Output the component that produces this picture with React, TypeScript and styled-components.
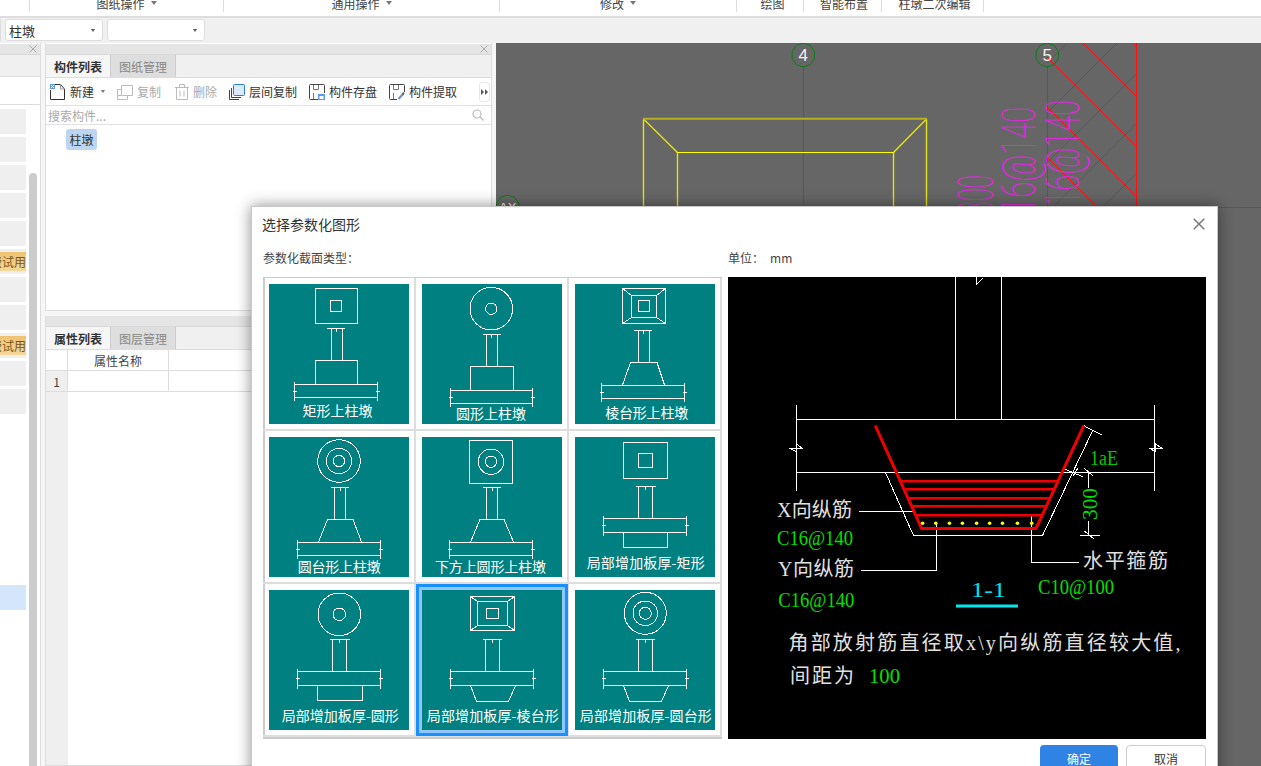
import React from "react";
import styled, { createGlobalStyle } from "styled-components";

const Global = createGlobalStyle`
  html, body { margin: 0; padding: 0; background: #fff; }
  body { font-family: "Noto Sans CJK SC", "Liberation Sans", sans-serif; font-size: 12px; color: #333; }
  * { box-sizing: border-box; }
`;

const Page = styled.div`
  position: relative;
  width: 1261px;
  height: 766px;
  overflow: hidden;
  display: flex;
  flex-direction: column;
  background: #f6f6f6;
`;

/* ---------- ribbon ---------- */
const Ribbon = styled.div`
  height: 18px;
  flex: none;
  display: flex;
  align-items: flex-start;
  background: #fff;
  border-bottom: 2px solid #ddd;
  overflow: hidden;
`;
const RibbonGroup = styled.div<{ $w: number; $pl?: number }>`
  width: ${(p) => p.$w}px;
  height: 12px;
  flex: none;
  display: flex;
  align-items: flex-end;
  justify-content: center;
  padding-left: ${(p) => p.$pl ?? 0}px;
  border-right: 1px solid #ddd;
  color: #444;
  line-height: 16px;
  white-space: nowrap;
`;
const RibbonCaret = styled.i`
  width: 0;
  height: 0;
  margin: 0 0 7px 6px;
  border-left: 3.5px solid transparent;
  border-right: 3.5px solid transparent;
  border-top: 4px solid #777;
`;

const SelectBar = styled.div`
  height: 25px;
  flex: none;
  display: flex;
  gap: 4px;
  padding-top: 1px;
  background: #f0f0f0;
`;
const Select = styled.div<{ $w: number }>`
  width: ${(p) => p.$w}px;
  height: 22px;
  display: flex;
  align-items: center;
  justify-content: space-between;
  padding: 0 7px 0 3px;
  background: #fff;
  border: 1px solid #ddd;
  border-radius: 3px;
  font-size: 13px;
  color: #333;
  overflow: hidden;
`;
const SelectStub = styled.div`
  width: 1px;
  height: 22px;
  background: #ddd;
`;
const SelectCaret = styled.i`
  width: 0;
  height: 0;
  border-left: 2.5px solid transparent;
  border-right: 2.5px solid transparent;
  border-top: 3px solid #555;
`;

/* ---------- main ---------- */
const Main = styled.div`
  flex: 1;
  min-height: 0;
  display: flex;
`;

const LeftPanel = styled.div`
  width: 41px;
  flex: none;
  display: flex;
  flex-direction: column;
  background: #fff;
  border-right: 1px solid #ddd;
`;
const PanelHead = styled.div<{ $flush?: boolean }>`
  height: 11px;
  flex: none;
  margin-top: ${(p) => (p.$flush ? 0 : 1)}px;
  display: flex;
  align-items: center;
  justify-content: flex-end;
  padding-right: 3px;
  background: #e5e5e5;
  border-bottom: 1px solid #d8d8d8;
`;
const LeftStrip = styled.div`
  height: 22px;
  flex: none;
  background: #f0f0f0;
  border-bottom: 1px solid #ddd;
`;
const LeftBlank = styled.div`
  height: 28px;
  flex: none;
  border-bottom: 1px solid #ddd;
`;
const LeftBody = styled.div`
  flex: 1;
  min-height: 0;
  display: flex;
  padding-top: 4px;
`;
const RowList = styled.div`
  width: 26px;
  flex: none;
  display: flex;
  flex-direction: column;
  gap: 3px;
`;
const NavRow = styled.div<{ $kind: string }>`
  height: 25px;
  flex: none;
  display: flex;
  align-items: center;
  justify-content: flex-end;
  overflow: hidden;
  background: ${(p) =>
    p.$kind === "selected" ? "#d4e6fb" : p.$kind === "empty" ? "#fff" : "#efefef"};
`;
const TrialBadge = styled.div`
  width: 26px;
  height: 19px;
  flex: none;
  display: flex;
  justify-content: flex-end;
  align-items: center;
  background: linear-gradient(#efc270, #f5d79b);
  color: #7b5518;
  line-height: 19px;
  white-space: nowrap;
`;
const ScrollThumb = styled.div`
  width: 8px;
  flex: none;
  margin: 64px 0 0 3px;
  background: #ccc;
  border-radius: 4px 4px 0 0;
`;

const MiddleColumn = styled.div`
  width: 447px;
  flex: none;
  margin: 0 4px;
  display: flex;
  flex-direction: column;
  gap: 5px;
`;
const Pane = styled.div<{ $h?: number }>`
  ${(p) => (p.$h ? `height: ${p.$h}px; flex: none;` : "flex: 1; min-height: 0;")}
  display: flex;
  flex-direction: column;
  background: #fff;
  border: 1px solid #ddd;
  border-top: 0;
`;
const TabStrip = styled.div`
  height: 23px;
  flex: none;
  display: flex;
  background: #f0f0f0;
  border-bottom: 1px solid #ddd;
`;
const Tab = styled.div<{ $active?: boolean }>`
  width: 65px;
  display: flex;
  align-items: center;
  justify-content: center;
  font-weight: ${(p) => (p.$active ? 700 : 400)};
  color: ${(p) => (p.$active ? "#333" : "#888")};
  background: ${(p) => (p.$active ? "#f6f6f6" : "#dedede")};
  border-right: 1px solid #ccc;
`;
const ToolRow = styled.div`
  height: 28px;
  flex: none;
  display: flex;
  align-items: center;
  gap: 12px;
  padding-left: 4px;
  border-bottom: 1px solid #e2e2e2;
`;
const ToolButton = styled.div<{ $muted?: boolean; $ml?: number }>`
  display: flex;
  align-items: center;
  gap: 4px;
  margin-left: ${(p) => p.$ml ?? 0}px;
  color: ${(p) => (p.$muted ? "#aaa" : "#333")};
  white-space: nowrap;
`;
const ToolCaret = styled.i`
  width: 0;
  height: 0;
  margin-left: 3px;
  border-left: 2.5px solid transparent;
  border-right: 2.5px solid transparent;
  border-top: 3px solid #777;
`;
const MoreButton = styled.div`
  width: 11px;
  height: 20px;
  margin: 0 1px 0 auto;
  display: flex;
  align-items: center;
  justify-content: center;
  background: #fff;
  border: 1px solid #e6e6e6;
  border-radius: 3px;
`;
const SearchRow = styled.div`
  height: 19px;
  flex: none;
  display: flex;
  align-items: center;
  justify-content: space-between;
  padding: 0 7px 0 2px;
  color: #aaa;
  border-bottom: 1px solid #e2e2e2;
`;
const TreeArea = styled.div`
  flex: 1;
  padding: 4px 0 0 20px;
`;
const TreeTag = styled.div`
  width: 31px;
  height: 21px;
  display: flex;
  align-items: center;
  justify-content: center;
  background: #bcd6f2;
  border-radius: 3px;
  color: #333;
`;
const PropGrid = styled.div`
  flex: none;
  display: grid;
  grid-template-columns: 22px 101px 1fr;
  grid-auto-rows: 21px;
`;
const PropCell = styled.div<{ $index?: boolean }>`
  display: flex;
  align-items: center;
  justify-content: center;
  background: ${(p) => (p.$index ? "#efefef" : "#fff")};
  color: #444;
  border-right: 1px solid #ddd;
  border-bottom: 1px solid #ddd;
`;
const PropFill = styled.div`
  flex: 1;
  width: 22px;
  background: #efefef;
`;

const CanvasArea = styled.div`
  flex: 1;
  min-width: 0;
  background: #666;
`;
const DrawingSvg = styled.svg`
  display: block;
  width: 100%;
  height: 100%;
`;

/* ---------- modal ---------- */
const Modal = styled.div`
  position: absolute;
  left: 251px;
  top: 206px;
  width: 967px;
  height: 590px;
  padding: 0 11px;
  background: #fff;
  border: 1px solid #c8c8c8;
  box-shadow: 0 0 14px rgba(0, 0, 0, 0.45);
`;
const ModalTitle = styled.div`
  height: 32px;
  margin-left: -1px;
  display: flex;
  align-items: center;
  justify-content: space-between;
  font-size: 14px;
  line-height: 20px;
  color: #333;
  padding: 2px 1px 0 0;
`;
const ModalBody = styled.div`
  display: flex;
  gap: 6px;
`;
const LeftCol = styled.div`
  width: 459px;
  flex: none;
`;
const RightCol = styled.div`
  width: 478px;
  flex: none;
`;
const SmallLabel = styled.div`
  height: 38px;
  display: flex;
  align-items: center;
  gap: 6px;
  padding-bottom: 2px;
  font-size: 12px;
  color: #444;
`;
const ThumbGrid = styled.div`
  display: grid;
  grid-template-columns: repeat(3, 153px);
  grid-auto-rows: 153px;
  border-top: 1px solid #ccc;
  border-bottom: 2px solid #ccc;
  box-shadow: inset 2px 0 0 #ccc, inset -2px 0 0 #ccc;
`;
const ThumbCell = styled.div`
  padding: 6px;
  border-right: 2px solid #ddd;
  border-bottom: 2px solid #ddd;
`;
const ThumbImage = styled.svg<{ $selected?: boolean }>`
  display: block;
  width: 140px;
  height: 140px;
  background: #008080;
  box-shadow: ${(p) => (p.$selected ? "0 0 0 3px #90c6f9, 0 0 0 6px #1890ff" : "none")};
`;
const ThumbCaption = styled.text`
  font-family: "Noto Sans CJK SC", sans-serif;
  font-size: 14px;
  fill: #fff;
  text-anchor: middle;
  dominant-baseline: central;
`;
const PreviewSvg = styled.svg`
  display: block;
  width: 478px;
  height: 462px;
  background: #000;
`;
const CadText = styled.text<{ $color?: string; $size?: number }>`
  font-family: "Liberation Serif", serif;
  font-size: ${(p) => p.$size ?? 22}px;
  fill: ${(p) => p.$color ?? "#00e000"};
  dominant-baseline: central;
`;
const CadLabel = styled.text`
  font-family: "Liberation Serif", "Noto Sans CJK SC", serif;
  font-size: 20px;
  fill: #e0e0e0;
  dominant-baseline: central;
`;
const Footer = styled.div`
  display: flex;
  justify-content: flex-end;
  gap: 8px;
  margin-top: 6px;
`;
const Button = styled.div<{ $primary?: boolean }>`
  width: ${(p) => (p.$primary ? 78 : 80)}px;
  height: 27px;
  display: flex;
  align-items: center;
  justify-content: center;
  border-radius: 4px;
  background: ${(p) => (p.$primary ? "#2e83e4" : "#fff")};
  border: ${(p) => (p.$primary ? "0" : "1px solid #ccc")};
  color: ${(p) => (p.$primary ? "#fff" : "#333")};
  font-size: 12px;
`;

/* ---------- icons ---------- */
const Cross = ({ s = 8, c = "#aaa" }: { s?: number; c?: string }) => (
  <svg width={s} height={s} viewBox="0 0 8 8" fill="none" stroke={c} strokeWidth="1">
    <path d="M.5.5l7 7M7.5.5l-7 7" />
  </svg>
);
const IconNew = () => (
  <svg width="16" height="16" viewBox="0 0 16 16" fill="none">
    <path d="M.5 6v9.5h14V5L10.5.5H5" stroke="#333" />
    <path d="M10.5.5V5h4" stroke="#999" />
    <path d="M0 0h5v5H0z" fill="#5b9bec" />
    <path d="M1 1h1v1H1zM3 1h1v1H3zM2 2h1v1H2zM1 3h1v1H1zM3 3h1v1H3z" fill="#fff" />
  </svg>
);
const IconCopy = () => (
  <svg width="16" height="16" viewBox="0 0 16 16" fill="none" stroke="#bbb">
    <path d="M4 10.5H.5V4.5H4M4.5 .5h11v10h-11z" transform="translate(0 1)" />
    <path d="M.5 5.5v10h10V11" />
  </svg>
);
const IconTrash = () => (
  <svg width="14" height="16" viewBox="0 0 14 16" fill="none" stroke="#bbb">
    <path d="M0 3.5h14M4.5 3V.5h5V3M1.5 3.5v12h11v-12M5 6.5v6M9 6.5v6" />
  </svg>
);
const IconFloorCopy = () => (
  <svg width="16" height="16" viewBox="0 0 16 16" fill="none">
    <rect x="4.5" y=".5" width="11" height="11" rx="1" fill="#dbe9fb" stroke="#2d7ce0" />
    <path d="M2.5 4v9.5H12M.5 6v9.5H10" stroke="#444" />
  </svg>
);
const IconSave = () => (
  <svg width="16" height="16" viewBox="0 0 16 16" fill="none">
    <path d="M9 15.5H1.5a1 1 0 0 1-1-1v-13a1 1 0 0 1 1-1h13a1 1 0 0 1 1 1V9" stroke="#444" />
    <path d="M4.5 1v4.5h5V1M4.5 15V9" stroke="#777" />
    <rect x="9" y="10" width="7" height="6" fill="#5b9bec" />
    <rect x="10.5" y="12" width="4" height="3" fill="#fff" />
  </svg>
);
const IconFetch = () => (
  <svg width="16" height="16" viewBox="0 0 16 16" fill="none">
    <path d="M8 15.5H1.5a1 1 0 0 1-1-1v-13a1 1 0 0 1 1-1h13a1 1 0 0 1 1 1V8" stroke="#444" />
    <path d="M4.5 1v4.5h5V1M4.5 15V9" stroke="#777" />
    <path d="M9.5 15l4.5-5" stroke="#6a8fc4" strokeWidth="2" />
    <path d="M13 9l2-1 .5 1.5-1.5 2z" fill="#555" />
  </svg>
);
const IconSearch = () => (
  <svg width="12" height="12" viewBox="0 0 12 12" fill="none" stroke="#bbb" strokeWidth="1.2">
    <circle cx="5" cy="5" r="4" />
    <path d="M8 8l3.5 3.5" />
  </svg>
);
const IconMore = () => (
  <svg width="7" height="6" viewBox="0 0 7 6" fill="#555">
    <path d="M0 0l3 3-3 3zM4 0l3 3-3 3z" />
  </svg>
);

/* ---------- thumbnail drawings ---------- */
const Rect = (x1: number, y1: number, x2: number, y2: number) => (
  <rect x={x1} y={y1} width={x2 - x1} height={y2 - y1} />
);
const Poly = (...p: number[]) => <polyline points={p.join(" ")} />;

type Thumb = { name: string; cap: [number, number, number]; selected?: boolean; art: React.ReactNode };

const Slab = (x1: number, x2: number, top: number, bot: number) => (
  <>
    {Poly(x1, top, x2, top)}
    {Poly(x1, bot, x2, bot)}
    {Poly(x1, top - 3, x1, bot + 3)}
    {Poly(x2, top - 3, x2, bot + 3)}
    {Poly(x1 - 2, (top + bot) / 2, x1 + 2, (top + bot) / 2)}
    {Poly(x2 - 2, (top + bot) / 2, x2 + 2, (top + bot) / 2)}
  </>
);
const Column = (cx: number, w1: number, w2: number, dim: number, bot: number, d1: number, d2: number) => (
  <>
    {Poly(w1, dim, w1, bot)}
    {Poly(w2, dim, w2, bot)}
    {Poly(d1, dim, d2, dim)}
    {Poly(cx, dim - 1, cx, dim + 3)}
  </>
);
const Circles = (cx: number, cy: number, ...r: number[]) => (
  <>
    {r.map((v) => (
      <circle key={v} cx={cx} cy={cy} r={v} />
    ))}
  </>
);
const Diag = (a: number, b: number, c: number, d: number, e: number, f: number, g: number, h: number) => (
  <>
    {Rect(a, b, c, d)}
    {Rect(e, f, g, h)}
    {Poly(a, b, e, f)}
    {Poly(c, b, g, f)}
    {Poly(a, d, e, h)}
    {Poly(c, d, g, h)}
  </>
);

const thumbs: Thumb[] = [
  {
    name: "矩形上柱墩", cap: [68.5, 126.2, 70],
    art: (
      <>
        {Rect(46.5, 4.5, 88.5, 39.5)}
        {Rect(61.5, 16.5, 72.5, 27.5)}
        {Column(67, 62.5, 73.5, 44.5, 76.5, 58, 76)}
        {Rect(46.5, 76.5, 88.5, 100.5)}
        {Slab(25.5, 108.5, 100.5, 113.5)}
      </>
    ),
  },
  {
    name: "圆形上柱墩", cap: [69, 128.5, 70],
    art: (
      <>
        {Circles(69.3, 24.7, 21.3, 5.7)}
        {Column(69.5, 64.5, 75.5, 50.5, 82.5, 60.5, 79)}
        {Rect(48.5, 82.5, 91.5, 106.5)}
        {Slab(28.5, 110.5, 106.5, 119.5)}
      </>
    ),
  },
  {
    name: "棱台形上柱墩", cap: [71.7, 127.8, 83],
    art: (
      <>
        {Diag(47.5, 4.5, 90.5, 39.5, 56.5, 11.5, 81.5, 33.5)}
        {Rect(63.5, 16.5, 74.5, 27.5)}
        {Column(68.5, 63.5, 74.5, 46.5, 78.5, 59, 77)}
        {Poly(47.5, 101, 55.5, 78.5, 82, 78.5, 89.5, 101)}
        {Slab(26.5, 109.5, 101.5, 114.5)}
      </>
    ),
  },
  {
    name: "圆台形上柱墩", cap: [70.2, 129.2, 83],
    art: (
      <>
        {Circles(70, 24, 21.3, 12.7, 5.7)}
        {Column(71, 65.5, 76.5, 50.5, 82.5, 61.5, 79.5)}
        {Poly(49.5, 105, 58.5, 82.5, 84, 82.5, 92.5, 105)}
        {Slab(28.5, 111.5, 105.5, 118.5)}
      </>
    ),
  },
  {
    name: "下方上圆形上柱墩", cap: [68.5, 129.2, 111],
    art: (
      <>
        {Rect(47.5, 3.5, 90.5, 46.5)}
        {Circles(69, 24.7, 12.7, 5.7)}
        {Column(70, 64.5, 75.5, 50.5, 82.5, 60.5, 79)}
        {Poly(48.5, 105, 58, 82.5, 82, 82.5, 91.5, 105)}
        {Slab(27.5, 110.5, 105.5, 118.5)}
      </>
    ),
  },
  {
    name: "局部增加板厚-矩形", cap: [70.7, 124.8, 118],
    art: (
      <>
        {Rect(48.5, 5.5, 92.5, 41.5)}
        {Rect(63.5, 16.5, 77.5, 30.5)}
        {Column(70.5, 63.5, 77.5, 49.5, 81.5, 61, 80.5)}
        {Slab(28.5, 111.5, 81.5, 95.5)}
        {Poly(48.5, 95.5, 48.5, 110.5, 92.5, 110.5, 92.5, 95.5)}
      </>
    ),
  },
  {
    name: "局部增加板厚-圆形", cap: [71.3, 125.2, 117],
    art: (
      <>
        {Circles(70.3, 24.3, 21.3, 6.3)}
        {Column(70.5, 63.5, 77.5, 49.5, 81.5, 60.5, 80.5)}
        {Slab(28.5, 111.5, 81.5, 95.5)}
        {Poly(48.5, 95.5, 48.5, 110.5, 93.5, 110.5, 93.5, 95.5)}
      </>
    ),
  },
  {
    name: "局部增加板厚-棱台形", cap: [70.8, 125.2, 132], selected: true,
    art: (
      <>
        {Diag(48.5, 6.5, 92.5, 40.5, 55.5, 11.5, 85.5, 35.5)}
        {Rect(64.5, 18.5, 76.5, 28.5)}
        {Column(70.5, 63.5, 77.5, 49.5, 81.5, 60.5, 79.5)}
        {Slab(28.5, 111.5, 81.5, 95.5)}
        {Poly(48.5, 95.5, 54.5, 111.5, 86.5, 111.5, 93.5, 95.5)}
      </>
    ),
  },
  {
    name: "局部增加板厚-圆台形", cap: [70.8, 125.2, 132],
    art: (
      <>
        {Circles(70.3, 23.3, 21, 12.3, 6)}
        {Column(70.5, 63.5, 77.5, 49.5, 81.5, 60.5, 80)}
        {Slab(28.5, 111.5, 81.5, 95.5)}
        {Poly(48.5, 95.5, 54.5, 111.5, 86.5, 111.5, 93.5, 95.5)}
      </>
    ),
  },
];

/* ---------- cad canvas behind the dialog ---------- */
const ringPoints = (cx: number, cy: number, r: number, n = 10) =>
  Array.from({ length: n }, (_, i) => {
    const a = (i / n) * Math.PI * 2 - Math.PI / 2;
    return `${(cx + r * Math.cos(a)).toFixed(1)},${(cy + r * Math.sin(a) * 1.02).toFixed(1)}`;
  }).join(" ");

const AxisMark = ({ x, y, label, size = 17 }: { x: number; y: number; label: string; size?: number }) => (
  <>
    <polygon points={ringPoints(x, y, 11.7)} fill="none" stroke="#0a7d14" strokeWidth="1" />
    <text
      x={x}
      y={y + 0.5}
      fill="#f4f4f4"
      fontFamily="Liberation Sans, sans-serif"
      fontSize={size}
      textAnchor="middle"
      dominantBaseline="central"
    >
      {label}
    </text>
  </>
);

const VerticalRebar = ({ x, y, t, size = 29, sy = 1.65 }: { x: number; y: number; t: string; size?: number; sy?: number }) => (
  <text
    transform={`translate(${x} ${y}) rotate(-90) scale(1 ${sy})`}
    textAnchor="end"
    fontFamily="Roboto, sans-serif"
    fontWeight="100"
    fontSize={size}
    fill="#f01cf0"
  >
    {t}
  </text>
);

const CadCanvas = () => {
  const cs = Array.from({ length: 8 }, (_, i) => i);
  return (
    <DrawingSvg viewBox="496 43 765 723">
      <defs>
        <clipPath id="hatchClip">
          <rect x="1047" y="43" width="90" height="164" />
        </clipPath>
      </defs>
      <g stroke="#ff1010" strokeWidth="1" fill="none">
        <path d="M803.5 67V207M1047.5 67V207M1136.5 43V207M496 207.5H1261" />
        <g clipPath="url(#hatchClip)">
          {cs.map((i) => {
            const down = -1090 + i * 50;
            const up = 1110 + i * 50;
            return (
              <React.Fragment key={i}>
                <path d={`M1040 ${1040 + down}L1140 ${1140 + down}`} />
                <path d={`M1040 ${up - 1040}L1140 ${up - 1140}`} />
              </React.Fragment>
            );
          })}
        </g>
      </g>
      <g stroke="#e4e418" strokeWidth="1.4" fill="none">
        <path d="M643.5 119V300M926.5 119V300M677.5 152V300M893.5 152V300" />
        <path d="M643.5 119L677.5 152.5M926.5 119L893.5 152.5" />
        <path d="M643 118.7H927" stroke="#b8b020" strokeWidth="2" />
        <path d="M677 152.5H894" stroke="#ffff00" strokeWidth="1" />
      </g>
      <AxisMark x={803.3} y={55} label="4" />
      <AxisMark x={1047.2} y={55} label="5" />
      <AxisMark x={507.7} y={207} label="AX" size={13} />
      <VerticalRebar x={1035} y={107} t="C16@140" />
      <VerticalRebar x={1079} y={100} t="C16@140" />
      <VerticalRebar x={992.6} y={175} t="300" size={24} sy={2.1} />
    </DrawingSvg>
  );
};

const dots = [922.6, 935.8, 949.4, 962.4, 976.6, 989.6, 1002.5, 1017.4, 1031.7];
const bars = [481.3, 489.3, 498.3, 506.3, 515.3];
const barEnds = [[902, 1057.7], [905.5, 1054], [909, 1049.5], [912.5, 1045.5], [916.5, 1041]];

const Preview = () => (
  <PreviewSvg viewBox="728 277 478 462">
    <g stroke="#fff" strokeWidth="1" fill="none" shapeRendering="crispEdges">
      <path d="M955.5 277V419M1001.5 277V419" />
      <path d="M976.5 277V284.5L983 278" />
      <path d="M796 419.5H1155M796 472.5H1155M796 405V491M1154.5 405V491" />
      <path d="M789 448H802L796 443.5V451.5L789 448M1149 448H1161.5L1155 443.5V451.5L1149 448" />
      <path d="M885.5 472.5L913.5 535.5H1042.5L1093 430" />
      <path d="M1083.8 425.7L1102 435M1064.4 469L1082.8 476.7M1084 468L1093 476M1073 476L1078 468" />
      <path d="M1088.5 472V488M1088.5 521V535M1079.5 535.5H1099.7M1084.5 531L1093.6 538.7" />
      <path d="M858.5 511.5H913.5M860.7 570.5H936.5V523M1031.5 516V562.5H1078.5" />
    </g>
    <g stroke="#f00000" fill="none">
      <polyline
        points="875.3,425.7 917.8,520 921.5,528.5 1035.8,528.5 1039,522 1083.8,425.7"
        strokeWidth="3"
        strokeLinejoin="round"
      />
      {bars.map((y, i) => (
        <line key={y} x1={barEnds[i][0]} x2={barEnds[i][1]} y1={y} y2={y} strokeWidth="2.4" />
      ))}
    </g>
    {dots.map((x) => (
      <circle key={x} cx={x} cy={523.3} r={1.8} fill="#ffff00" />
    ))}
    <line x1="956" x2="1018" y1="606" y2="606" stroke="#00e8f0" strokeWidth="3" />

    <CadText x={1090} y={458} $size={20} $color="#00c800" textLength={28} lengthAdjust="spacingAndGlyphs">1aE</CadText>
    <CadText transform="translate(1089 520) rotate(-90)" textLength={32} lengthAdjust="spacingAndGlyphs">300</CadText>
    <CadLabel x={777} y={510} textLength={75}>X向纵筋</CadLabel>
    <CadText x={777} y={537.7} textLength={76} lengthAdjust="spacingAndGlyphs">C16@140</CadText>
    <CadLabel x={778} y={569} textLength={76}>Y向纵筋</CadLabel>
    <CadText x={778.3} y={599.3} textLength={76} lengthAdjust="spacingAndGlyphs">C16@140</CadText>
    <CadLabel x={1083} y={561} textLength={85}>水平箍筋</CadLabel>
    <CadText x={1038} y={586} textLength={76} lengthAdjust="spacingAndGlyphs">C10@100</CadText>
    <CadText x={971} y={589} $color="#00e0f0" textLength={35} lengthAdjust="spacingAndGlyphs">1-1</CadText>
    <CadLabel x={788.5} y={643.3} textLength={392}>角部放射筋直径取x\y向纵筋直径较大值,</CadLabel>
    <CadLabel x={790} y={675.7} textLength={64}>间距为</CadLabel>
    <CadText x={869} y={675.7} textLength={31} lengthAdjust="spacingAndGlyphs">100</CadText>
  </PreviewSvg>
);

const navRows: string[] = [
  ...Array(5).fill("plain"),
  "badge",
  "plain",
  "plain",
  "badge",
  "plain",
  "plain",
  ...Array(6).fill("empty"),
  "selected",
];

const ribbon: { w: number; label?: string; caret?: boolean; pl?: number }[] = [
  { w: 30 },
  { w: 194, label: "图纸操作", caret: true },
  { w: 276, label: "通用操作", caret: true },
  { w: 237, label: "修改", caret: true },
  { w: 67, label: "绘图", pl: 5 },
  { w: 78, label: "智能布置", pl: 3 },
  { w: 102, label: "柱墩二次编辑", pl: 4 },
];

export default function App() {
  return (
    <Page>
      <Global />
      <Ribbon>
        {ribbon.map((g, i) => (
          <RibbonGroup key={i} $w={g.w} $pl={g.pl}>
            {g.label}
            {g.caret && <RibbonCaret />}
          </RibbonGroup>
        ))}
      </Ribbon>
      <SelectBar>
        <SelectStub />
        <Select $w={98}>
          柱墩
          <SelectCaret />
        </Select>
        <Select $w={98}>
          <span />
          <SelectCaret />
        </Select>
      </SelectBar>
      <Main>
        <LeftPanel>
          <PanelHead>
            <Cross />
          </PanelHead>
          <LeftStrip />
          <LeftBlank />
          <LeftBody>
            <RowList>
              {navRows.map((k, i) => (
                <NavRow key={i} $kind={k}>
                  {k === "badge" && <TrialBadge>免费试用</TrialBadge>}
                </NavRow>
              ))}
            </RowList>
            <ScrollThumb />
          </LeftBody>
        </LeftPanel>
        <MiddleColumn>
          <Pane $h={268}>
            <PanelHead>
              <Cross />
            </PanelHead>
            <TabStrip>
              <Tab $active>构件列表</Tab>
              <Tab>图纸管理</Tab>
            </TabStrip>
            <ToolRow>
              <ToolButton>
                <IconNew />
                新建
                <ToolCaret />
              </ToolButton>
              <ToolButton $muted>
                <IconCopy />
                复制
              </ToolButton>
              <ToolButton $muted $ml={2}>
                <IconTrash />
                删除
              </ToolButton>
              <ToolButton>
                <IconFloorCopy />
                层间复制
              </ToolButton>
              <ToolButton>
                <IconSave />
                构件存盘
              </ToolButton>
              <ToolButton>
                <IconFetch />
                构件提取
              </ToolButton>
              <MoreButton>
                <IconMore />
              </MoreButton>
            </ToolRow>
            <SearchRow>
              搜索构件...
              <IconSearch />
            </SearchRow>
            <TreeArea>
              <TreeTag>柱墩</TreeTag>
            </TreeArea>
          </Pane>
          <Pane>
            <PanelHead $flush />
            <TabStrip>
              <Tab $active>属性列表</Tab>
              <Tab>图层管理</Tab>
            </TabStrip>
            <PropGrid>
              <PropCell />
              <PropCell>属性名称</PropCell>
              <PropCell />
              <PropCell $index>1</PropCell>
              <PropCell />
              <PropCell />
            </PropGrid>
            <PropFill />
          </Pane>
        </MiddleColumn>
        <CanvasArea>
          <CadCanvas />
        </CanvasArea>
      </Main>

      <Modal>
        <ModalTitle>
          选择参数化图形
          <Cross s={12} c="#777" />
        </ModalTitle>
        <ModalBody>
          <LeftCol>
            <SmallLabel>参数化截面类型：</SmallLabel>
            <ThumbGrid>
              {thumbs.map((t) => (
                <ThumbCell key={t.name}>
                  <ThumbImage viewBox="0 0 140 140" $selected={t.selected}>
                    <g fill="none" stroke="#fff" strokeWidth="1" shapeRendering="crispEdges">
                      {t.art}
                    </g>
                    <ThumbCaption x={t.cap[0]} y={t.cap[1]} textLength={t.cap[2]}>
                      {t.name}
                    </ThumbCaption>
                  </ThumbImage>
                </ThumbCell>
              ))}
            </ThumbGrid>
          </LeftCol>
          <RightCol>
            <SmallLabel>
              <span>单位：</span>
              <span>mm</span>
            </SmallLabel>
            <Preview />
          </RightCol>
        </ModalBody>
        <Footer>
          <Button $primary>确定</Button>
          <Button>取消</Button>
        </Footer>
      </Modal>
    </Page>
  );
}
